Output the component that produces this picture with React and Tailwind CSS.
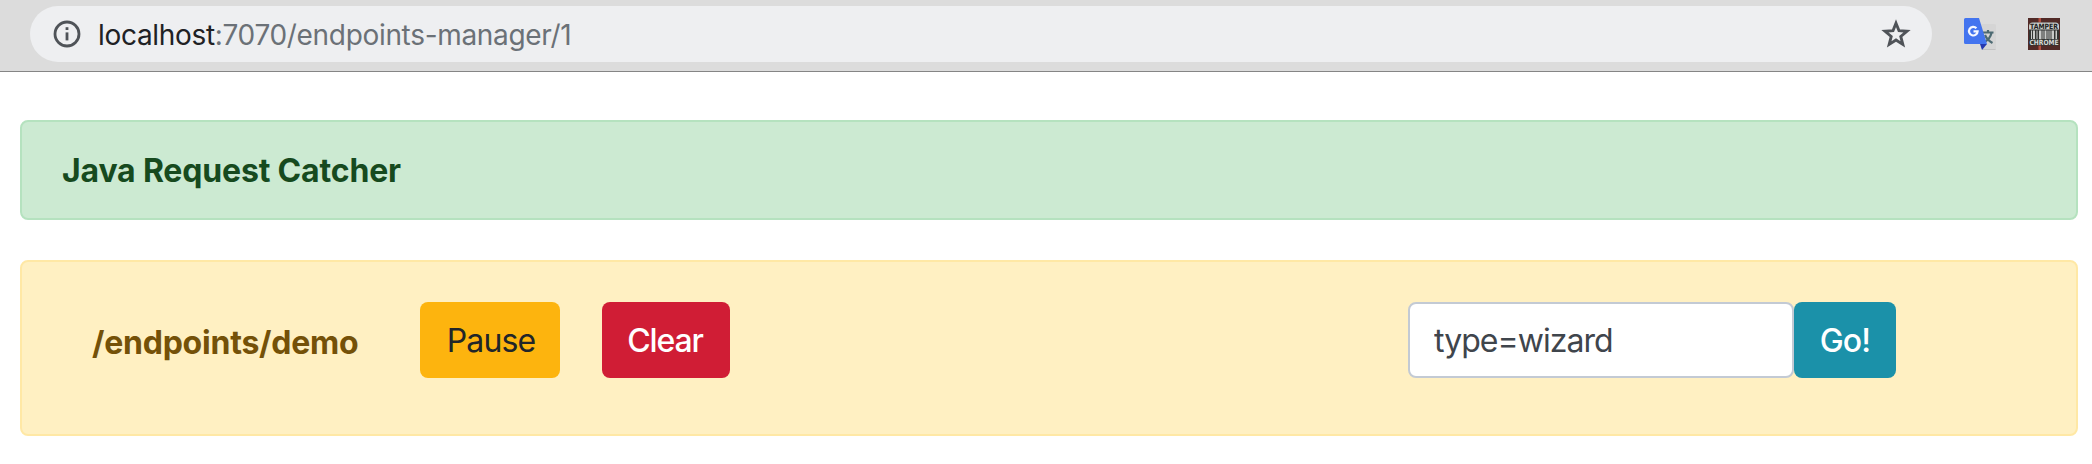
import React from "react";

function InfoIcon() {
  return (
    <svg className="h-7 w-7 shrink-0" viewBox="0 0 28 28" fill="none">
      <circle cx="14" cy="14" r="12" stroke="#4f5358" strokeWidth="2.8" />
      <rect x="12.6" y="12.4" width="2.8" height="8" fill="#4f5358" />
      <rect x="12.6" y="7.2" width="2.8" height="2.8" fill="#4f5358" />
    </svg>
  );
}

function StarIcon() {
  return (
    <svg className="h-[34px] w-[34px] shrink-0" viewBox="0 0 34 34" fill="none">
      <path d="M17 6.200l3 7.500 8 .600-6.200 5.200 2 7.900-6.800-4.400-6.800 4.400 2-7.900-6.200-5.200 8-.600z" stroke="#4f5358" strokeWidth="2.900" />
    </svg>
  );
}

function TranslateIcon() {
  return (
    <svg className="h-8 w-8 shrink-0" viewBox="0 0 32 32">
      <path d="M13 6h17.500a1.500 1.500 0 0 1 1.500 1.500v23a1.500 1.500 0 0 1-1.500 1.500H18z" fill="#d5d5d5" />
      <path d="M18 31.500h13.500" stroke="#c2c2c2" strokeWidth="1" />
      <path d="M18 14.500h11.500M24 12v2.500M27.500 15c-1 4-4 7.500-7 9M21 17c1.500 3.500 4 6 7.500 8" stroke="#4d6a72" strokeWidth="2.200" fill="none" />
      <path d="M16 26h7l-5 6z" fill="#2538b0" />
      <path d="M1.500 0H15l8 26H1.500A1.500 1.500 0 0 1 0 24.500v-23A1.500 1.500 0 0 1 1.500 0z" fill="#4374ef" />
      <path d="M12.400 10.200A4.300 4.300 0 1 0 13.600 13.400H9.500" stroke="#f4f7ff" strokeWidth="2.200" fill="none" />
    </svg>
  );
}

const BARS = [
  [3, 1], [5, 2], [8.5, 1], [11, 2.5], [14.5, 1], [16.5, 2],
  [19.5, 1], [21.5, 1], [23.5, 2.5], [27.5, 1.5],
];

function TamperIcon() {
  return (
    <svg className="h-8 w-8 shrink-0" viewBox="0 0 32 32">
      <rect width="32" height="32" fill="#512a27" />
      <rect x="10.500" width="2.500" height="32" fill="#b34d3f" />
      <path d="M1 27.500V8q0-3.500 3.500-3.500h23Q31 4.500 31 8v19.500z" fill="#323533" />
      <path d="M1 11.500V8q0-3.500 3.500-3.500h23Q31 4.500 31 8v3.500z" fill="#c9cbc9" />
      {BARS.map(([x, w]) => (
        <rect key={x} x={x} y="12.500" width={w} height="8.500" fill="#c9cbc9" />
      ))}
      <text transform="translate(2 11) scale(1 1.2)" textLength="28" lengthAdjust="spacingAndGlyphs" className="font-['DejaVu_Sans',sans-serif] text-[6px] font-bold" fill="#222">TAMPER</text>
      <text transform="translate(1.500 27) scale(1 1.2)" textLength="29" lengthAdjust="spacingAndGlyphs" className="font-['DejaVu_Sans',sans-serif] text-[6px] font-bold" fill="#d5d7d5">CHROME</text>
    </svg>
  );
}

export default function App() {
  return (
    <div className="h-[464px] w-full overflow-hidden bg-white font-['Inter',sans-serif]">
      <header className="flex h-[72px] items-start border-b border-[#858585] bg-[#dcdcdc] pt-1.5 pl-[30px]">
        <div className="flex h-14 w-[1902px] items-center rounded-full bg-[#eeeff1] pr-[19px] pl-[23px]">
          <InfoIcon />
          <div className="ml-[17px] flex-1 pt-px text-[28px] leading-10 tracking-[-0.32px] whitespace-nowrap text-[#202124]">
            localhost<span className="text-[#6b7177]">:7070/endpoints-manager/1</span>
          </div>
          <StarIcon />
        </div>
        <div className="mt-3 ml-8 flex gap-8">
          <TranslateIcon />
          <TamperIcon />
        </div>
      </header>
      <main className="flex flex-col gap-10 pt-12 pr-[14px] pl-5">
        <section className="flex h-[100px] items-center rounded-lg border-2 border-[#b5e2bf] bg-[#ccead2] pt-0.5 pl-10">
          <h1 className="text-[32px] leading-[48px] font-bold tracking-[-0.17px] text-[#164a1e]">Java Request Catcher</h1>
        </section>
        <section className="flex h-44 items-start rounded-lg border-2 border-[#ffe8a5] bg-[#fff0c2] pt-10 pl-[70px]">
          <h2 className="w-[328px] pt-[17px] text-[32px] leading-[48px] font-bold tracking-[-0.23px] text-[#745108]">/endpoints/demo</h2>
          <button className="h-[76px] w-[140px] rounded-lg bg-[#fdb40e] pt-0.5 pl-0.5 text-[32px] leading-[48px] tracking-[-0.9px] text-[#212529]">Pause</button>
          <button className="ml-[42px] h-[76px] w-32 rounded-lg bg-[#d01d35] pt-0.5 pr-0.5 text-[32px] leading-[48px] font-medium tracking-[-1.1px] text-white">Clear</button>
          <form className="ml-[678px] flex">
            <input className="h-[76px] w-[386px] rounded-lg border-2 border-[#c3cad4] bg-white px-6 text-[32px] tracking-[-0.95px] text-[#3f454c] outline-none" defaultValue="type=wizard" />
            <button type="button" className="h-[76px] w-[102px] rounded-lg bg-[#1b91a9] pt-0.5 text-[32px] leading-[48px] font-medium tracking-[-0.8px] text-white">Go!</button>
          </form>
        </section>
      </main>
    </div>
  );
}
